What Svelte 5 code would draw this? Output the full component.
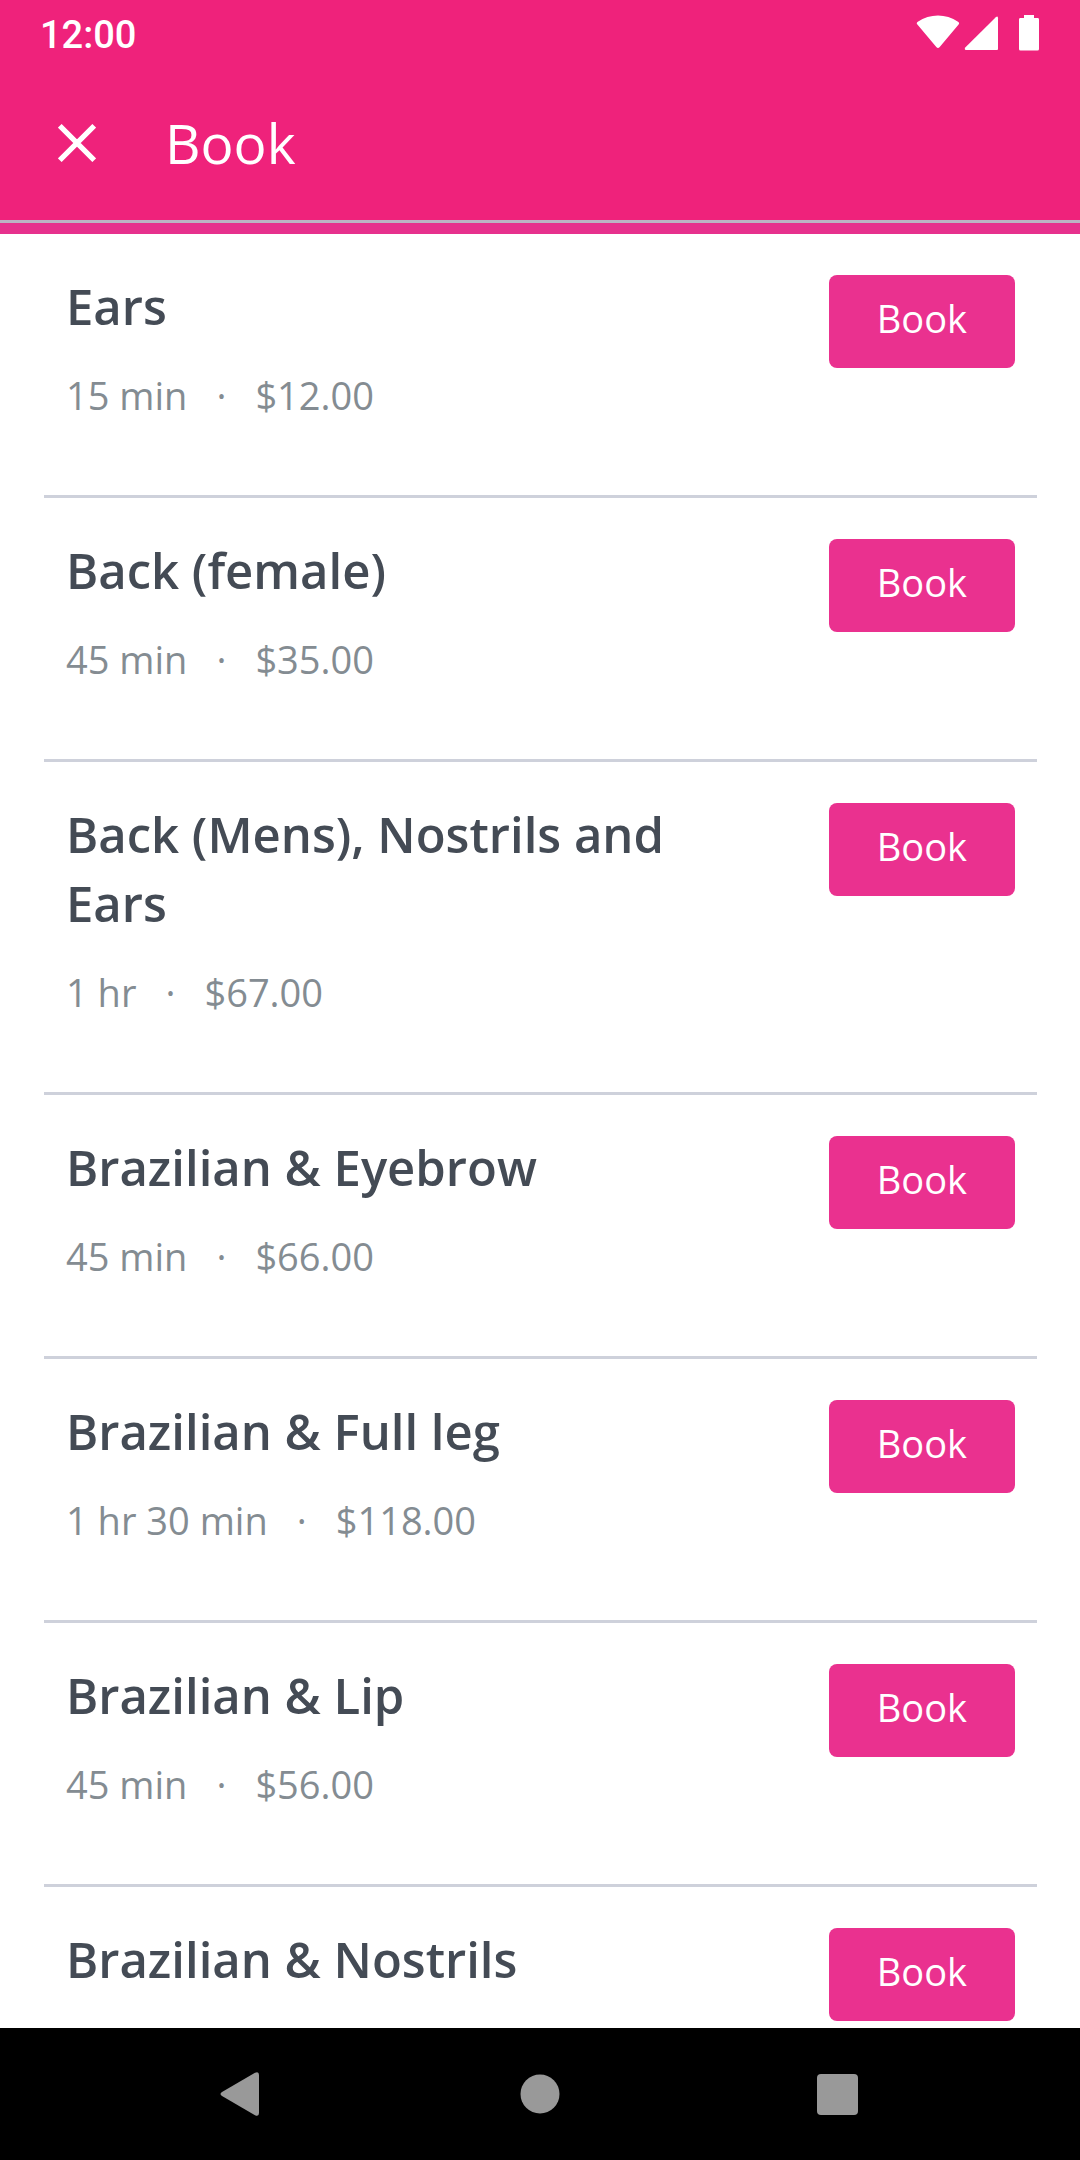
<script>
  const services = [
    { name: "Ears", duration: "15 min", price: "$12.00" },
    { name: "Back (female)", duration: "45 min", price: "$35.00" },
    { name: "Back (Mens), Nostrils and Ears", duration: "1 hr", price: "$67.00" },
    { name: "Brazilian & Eyebrow", duration: "45 min", price: "$66.00" },
    { name: "Brazilian & Full leg", duration: "1 hr 30 min", price: "$118.00" },
    { name: "Brazilian & Lip", duration: "45 min", price: "$56.00" },
    { name: "Brazilian & Nostrils" },
  ];
</script>

<div class="screen">
  <header>
    <div class="status-bar">
      <span>12:00</span>
      <svg width="124" height="36" viewBox="0 0 124 36" fill="#fff" aria-hidden="true">
        <path d="M1.6 9.7Q-.2 8.100 1.8 6.700C14-1.500 30-1.500 42 6.700Q44 8.100 42.4 9.700L23.7 32Q22 34 20.300 32Z" />
        <path d="M49.5 32.2 79.8 2.2Q82 .6 82 3.2V34Q82 35 81 35H50Q47.8 34.5 49.5 32.2Z" />
        <path d="M108 0h10v3h4q1 0 1 1.5v29.5q0 1.5-1.5 1.500h-17q-1.5 0-1.5-1.5v-29.5q0-1.5 1-1.5h4z" />
      </svg>
    </div>
    <div class="app-bar">
      <button aria-label="Close">
        <svg width="38" height="38" viewBox="0 0 38 38" stroke="#fff" stroke-width="5.2" aria-hidden="true">
          <path d="M1.8 1.8 36.2 36.2M36.2 1.8 1.8 36.2" />
        </svg>
      </button>
      <h1>Book</h1>
    </div>
  </header>

  <main>
    <ul>
      {#each services as service}
        <li>
          <div>
            <h2>{service.name}</h2>
            {#if service.price}
              <p class="meta">
                <span>{service.duration}</span>
                <span>·</span>
                <span>{service.price}</span>
              </p>
            {/if}
          </div>
          <button class="book">Book</button>
        </li>
      {/each}
    </ul>
  </main>

  <nav>
    <button aria-label="Back">
      <svg width="46" height="46" viewBox="0 0 46 46" fill="#999" aria-hidden="true">
        <path d="M4 21 37 1.8Q41 0 41 4V42Q41 46 37 44.2L4 25Q1 23 4 21Z" />
      </svg>
    </button>
    <button aria-label="Home">
      <svg width="46" height="46" viewBox="0 0 46 46" fill="#999" aria-hidden="true">
        <circle cx="23" cy="23" r="19.5" />
      </svg>
    </button>
    <button aria-label="Recent apps">
      <svg width="46" height="46" viewBox="0 0 46 46" fill="#999" aria-hidden="true">
        <rect x="1" y="3" width="41" height="41" rx="4" />
      </svg>
    </button>
  </nav>
</div>

<style>
  :global(body) {
    margin: 0;
  }

  .screen {
    display: flex;
    flex-direction: column;
    height: 100vh;
    background: #fff;
    font-family: "Open Sans", "Noto Sans", sans-serif;
  }

  button {
    padding: 0;
    border: 0;
    background: none;
    font-family: inherit;
    cursor: pointer;
  }

  svg {
    display: block;
  }

  header {
    flex: none;
    background: #ef227b;
    border-bottom: 3px solid #bbb4c4;
    color: #fff;
  }

  .status-bar {
    display: flex;
    justify-content: space-between;
    align-items: flex-start;
    box-sizing: border-box;
    height: 66px;
    padding: 15px 40px 0;
    font-family: Roboto, sans-serif;
    font-size: 38px;
    font-weight: 500;
    line-height: 40px;
  }

  .app-bar {
    display: flex;
    align-items: center;
    gap: 69px;
    height: 154px;
    padding: 0 58px;
  }

  h1 {
    margin: 0;
    font-size: 55px;
    font-weight: 400;
    line-height: 76px;
  }

  main {
    flex: 1;
    min-height: 0;
    overflow-y: auto;
    scrollbar-width: none;
    border-top: 11px solid #e6318d;
  }

  ul {
    margin: 0;
    padding: 0 43px 0 44px;
    list-style: none;
  }

  li {
    display: flex;
    justify-content: space-between;
    align-items: flex-start;
    gap: 60px;
    padding: 38px 22px 73px;
    border-bottom: 3px solid #ced1db;
  }

  h2 {
    margin: 0 0 27px;
    color: #444b55;
    font-size: 49px;
    font-weight: 600;
    line-height: 69px;
  }

  .meta {
    display: flex;
    gap: 29px;
    margin: 0;
    color: #848c92;
    font-size: 38px;
    line-height: 54px;
  }

  .book {
    flex: none;
    margin-top: 3px;
    padding: 16px 48px 23px;
    border-radius: 8px;
    background: #ea318f;
    color: #fff;
    font-size: 38px;
    line-height: 54px;
  }

  nav {
    display: flex;
    flex: none;
    justify-content: space-between;
    align-items: center;
    height: 132px;
    padding: 0 218px;
    background: #000;
  }
</style>
